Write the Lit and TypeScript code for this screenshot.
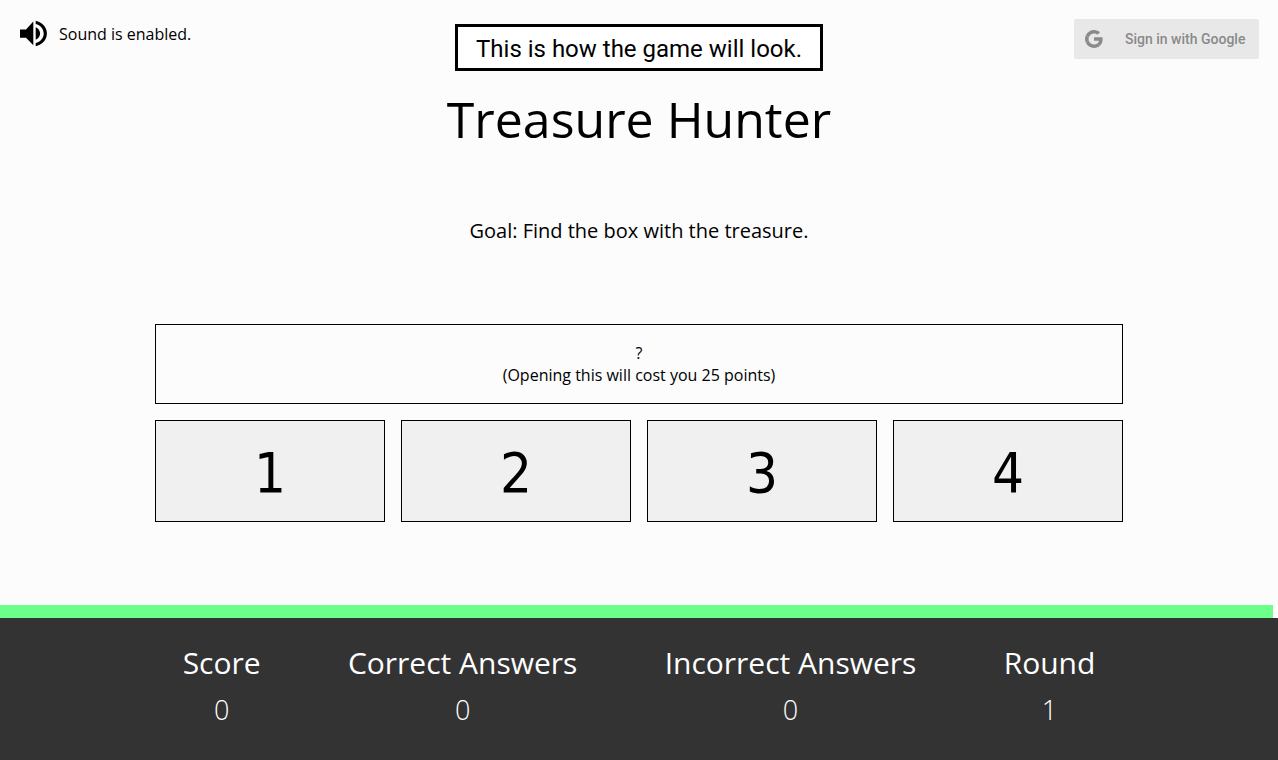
import { LitElement, html, css } from "lit";
import { customElement, property, state } from "lit/decorators.js";

@customElement("score-board")
class ScoreBoard extends LitElement {
  @property({ attribute: false }) stats: { label: string; value: number }[] = [];

  static styles = css`
    :host {
      display: block;
      background: #333;
      color: #fff;
    }
    .stats {
      display: flex;
      justify-content: space-around;
      max-width: 1000px;
      margin: 0 auto;
      padding: 24px 0 28px;
      text-align: center;
    }
    .label {
      font-size: 30px;
      line-height: 42px;
    }
    .value {
      margin: 4px 0 0;
      font-size: 27px;
      line-height: 44px;
      font-weight: 300;
    }
  `;

  render() {
    return html`<dl class="stats">
      ${this.stats.map(
        (s) => html`<div>
          <dt class="label">${s.label}</dt>
          <dd class="value">${s.value}</dd>
        </div>`
      )}
    </dl>`;
  }
}

@customElement("app-root")
class AppRoot extends LitElement {
  @state() private timeLeft = 99.6;
  @state() private boxes = [1, 2, 3, 4];
  @state() private stats = [
    { label: "Score", value: 0 },
    { label: "Correct Answers", value: 0 },
    { label: "Incorrect Answers", value: 0 },
    { label: "Round", value: 1 },
  ];

  static styles = css`
    :host {
      display: flex;
      flex-direction: column;
      min-height: 100vh;
      background: #fcfcfc;
      color: #000;
      font-family: "Open Sans", sans-serif;
      font-size: 16px;
      line-height: 22px;
    }
    * {
      box-sizing: border-box;
    }
    button {
      margin: 0;
      font: inherit;
      color: inherit;
      cursor: pointer;
    }
    .top {
      display: grid;
      grid-template-columns: 1fr auto 1fr;
      align-items: start;
      padding: 19px 19px 0;
    }
    .sound {
      display: flex;
      align-items: center;
      justify-self: start;
      gap: 10px;
      padding: 0;
      border: 0;
      background: none;
    }
    .sound svg {
      width: 30px;
      height: 30px;
    }
    .banner {
      margin: 5px 0 0;
      padding: 6px 18px 2px;
      border: 3px solid #000;
      background: #fff;
      font: 24px/33px Roboto, sans-serif;
    }
    .google {
      display: flex;
      align-items: center;
      justify-self: end;
      height: 40px;
      gap: 22px;
      padding: 0 13px 0 11px;
      border: 0;
      border-radius: 2px;
      background: #e8e8e8;
      color: #8a8a8a;
      font: 500 14px/20px Roboto, sans-serif;
      min-width: 185px;
    }
    .google svg {
      width: 18px;
      height: 18px;
    }
    main {
      flex: 1;
      width: 100%;
      max-width: 1000px;
      margin: 0 auto;
      padding: 0 16px 32px;
      text-align: center;
    }
    h1 {
      margin: 13px 0 0;
      font-size: 50px;
      line-height: 70px;
      font-weight: 400;
    }
    .goal {
      margin: 63px 0 79px;
      font-size: 20px;
      line-height: 28px;
    }
    .clue {
      display: block;
      width: 100%;
      padding: 17px;
      border: 1px solid #000;
      background: none;
    }
    .clue span {
      display: block;
    }
    .boxes {
      display: grid;
      grid-template-columns: repeat(4, 1fr);
      gap: 16px;
      margin-top: 16px;
    }
    .box {
      padding: 18px 16px 14px;
      border: 1px solid #000;
      background: #f0f0f0;
      font: 56px/68px "DejaVu Sans Condensed", "DejaVu Sans", sans-serif;
    }
    .timer {
      height: 13px;
      background: #fff;
    }
    .left {
      height: 100%;
      background: #6cff8a;
    }
  `;

  render() {
    return html`
      <header class="top">
        <button class="sound">
          <svg viewBox="0 0 30 30" aria-hidden="true">
            <path d="M1 10.500v8.200h6L14.300 26.200V2.600L7 10.500z" />
            <path d="M16.700 8.300v12.400c2.600-1.100 4.400-3.400 4.400-6.200s-1.800-5.100-4.400-6.200z" />
            <path d="M16.700 1.800v3.100c4.700 1.200 8 5 8 9.600s-3.300 8.400-8 9.600v3.100c6.400-1.300 11.200-6.500 11.200-12.700S23.100 3.100 16.700 1.800z" />
          </svg>
          <span>Sound is enabled.</span>
        </button>
        <p class="banner">This is how the game will look.</p>
        <button class="google">
          <svg viewBox="0 0 18 18" fill="#8a8a8a" aria-hidden="true">
            <path d="M9 3.480c1.690 0 2.830.73 3.480 1.340l2.540-2.480C13.460.89 11.430 0 9 0 5.480 0 2.440 2.020.96 4.960l2.910 2.260C4.600 5.050 6.620 3.480 9 3.480z" />
            <path d="M17.640 9.200c0-.74-.06-1.280-.19-1.840H9v3.340h4.960c-.1.830-.64 2.080-1.840 2.920l2.840 2.200c1.700-1.570 2.680-3.880 2.680-6.620z" />
            <path d="M3.880 10.780A5.540 5.540 0 0 1 3.580 9c0-.62.110-1.220.29-1.780L.96 4.960A9.008 9.008 0 0 0 0 9c0 1.450.35 2.820.96 4.040l2.920-2.260z" />
            <path d="M9 18c2.430 0 4.470-.8 5.960-2.180l-2.840-2.200c-.76.53-1.780.9-3.120.9-2.380 0-4.400-1.570-5.120-3.740L.97 13.040C2.450 15.980 5.480 18 9 18z" />
          </svg>
          <span>Sign in with Google</span>
        </button>
      </header>
      <main>
        <h1>Treasure Hunter</h1>
        <p class="goal">Goal: Find the box with the treasure.</p>
        <button class="clue">
          <span>?</span>
          <span>(Opening this will cost you 25 points)</span>
        </button>
        <div class="boxes">
          ${this.boxes.map((n) => html`<button class="box">${n}</button>`)}
        </div>
      </main>
      <div class="timer" role="progressbar" aria-label="Time left" aria-valuenow=${this.timeLeft}>
        <div class="left" style="width: ${this.timeLeft}%"></div>
      </div>
      <score-board .stats=${this.stats}></score-board>
    `;
  }
}
